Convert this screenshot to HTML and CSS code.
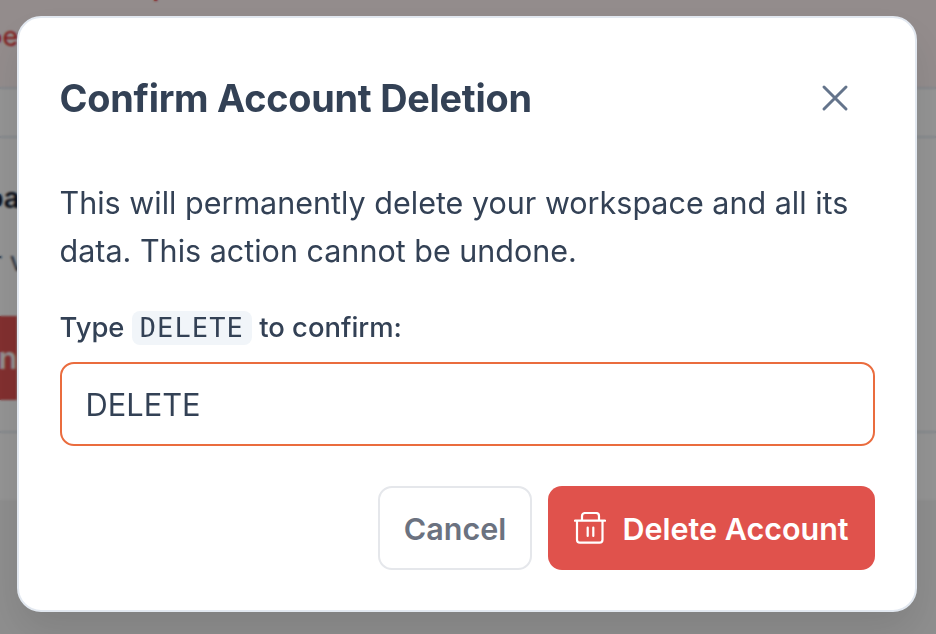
FILE: index.html
```html
<!DOCTYPE html>
<html lang="en">
<head>
<meta charset="utf-8">
<title>Confirm Account Deletion</title>
<link rel="stylesheet" href="styles.css">
</head>
<body>
<div class="page">
  <section class="alert">
    <p class="alert-line alert-top">y</p>
    <p class="alert-line alert-bottom">be</p>
  </section>
  <section class="band-plain"></section>
  <section class="danger">
    <h3 class="danger-title">pa</h3>
    <p class="danger-text">r v</p>
    <div class="danger-btn">n</div>
  </section>
  <section class="band-last"></section>
  <section class="foot"></section>
</div>
<div class="overlay">
  <div class="modal" role="dialog">
    <header class="modal-head">
      <h2 class="modal-title">Confirm Account Deletion</h2>
      <svg class="close" width="30" height="30" viewBox="0 0 30 30" fill="none" stroke="#64748b" stroke-width="3" stroke-linecap="round"><path d="M4 4 26 26M26 4 4 26"/></svg>
    </header>
    <p class="modal-text">This will permanently delete your workspace and all its data. This action cannot be undone.</p>
    <label class="field-label" for="confirm">Type <code class="kbd">DELETE</code> to confirm:</label>
    <input class="field" id="confirm" type="text" value="DELETE">
    <footer class="actions">
      <button class="btn btn-cancel" type="button">Cancel</button>
      <button class="btn btn-delete" type="button">
        <svg width="32" height="32" viewBox="0 0 32 32" fill="none" stroke="#fff" stroke-width="2.2" stroke-linecap="round" stroke-linejoin="round"><path d="M1 8.700h30M3 8.700v19a3 3 0 0 0 3 3h19.500a3 3 0 0 0 3-3v-19M8 8.700v-4.700a3 3 0 0 1 3-3h11a3 3 0 0 1 3 3v4.700M13.700 15.500v8.500M19.300 15.500v8.500"/></svg>
        <span>Delete Account</span>
      </button>
    </footer>
  </div>
</div>
</body>
</html>
```

FILE: styles.css
```css
* { box-sizing: border-box; }
html, body { margin: 0; height: 100%; overflow: hidden; }
body { font-family: Inter, "Liberation Sans", sans-serif; background: #fff; color: #334155; }

.page { height: 634px; display: flex; flex-direction: column; }
.alert { height: 89px; background: #fdf2f2; border-bottom: 2px solid #e2e8f0; overflow: hidden; }
.alert-line { margin: 0; color: #dc2626; font-size: 27px; line-height: 40px; white-space: nowrap; }
.alert-top { margin-top: -34px; padding-left: 152px; }
.alert-bottom { margin: 11px 0 0 -14px; }
.band-plain { height: 49px; background: #fff; border-bottom: 2px solid #e2e8f0; }
.danger { height: 295px; background: #fff; border-bottom: 2px solid #e2e8f0; padding-top: 42px; }
.danger-title { margin: 0 0 0 -14px; font-size: 28px; line-height: 36px; color: #0f172a; font-weight: 600; }
.danger-text { margin: 26px 0 0 -8px; font-size: 27px; line-height: 40px; color: #475569; white-space: nowrap; }
.danger-btn { margin-top: 34px; width: 200px; height: 84px; margin-left: -183px; background: #e05252; color: #fff; font-size: 30px; font-weight: 600; display: flex; align-items: center; justify-content: flex-end; }
.band-last { height: 67px; background: #fff; }
.foot { flex: 1; background: #f4f4f4; }

.overlay { position: fixed; inset: 0; background: rgba(0, 0, 0, .42); backdrop-filter: blur(1px); display: flex; align-items: flex-start; justify-content: center; padding: 16px 2px 0 0; }
.modal { width: 900px; height: 596px; background: #fff; border: 2px solid #e2e8f0; border-radius: 24px; padding: 51px 40px 40px 40.5px; box-shadow: 0 20px 40px rgba(0, 0, 0, .1); display: flex; flex-direction: column; }
.modal-head { display: flex; justify-content: space-between; align-items: center; height: 58px; padding-right: 25px; }
.modal-title { margin: 0; font-size: 37.85px; line-height: 58px; font-weight: 700; color: #334155; letter-spacing: -.24px; }
.modal-text { margin: 52px 0 0; font-size: 30.5px; line-height: 48px; color: #334155; }
.field-label { display: block; margin-top: 31px; font-size: 27.4px; line-height: 42px; font-weight: 500; color: #334155; }
.kbd { display: inline-block; font-family: "DejaVu Sans Mono", monospace; font-size: 27px; line-height: 34px; font-weight: 500; letter-spacing: 1.1px; background: #f1f5f9; border-radius: 8px; padding: 0 8px; }
.field { margin-top: 14px; width: 100%; height: 84px; border: 2px solid #ea6c3e; border-radius: 14px; padding: 0 24px; font: 400 30.8px Inter, sans-serif; color: #334155; background: #fff; outline: 0; }
.actions { display: flex; justify-content: flex-end; gap: 16px; margin-top: 40px; }
.btn { height: 84px; border-radius: 14px; font: 600 30.5px Inter, sans-serif; display: flex; align-items: center; cursor: pointer; }
.btn-cancel { width: 154px; justify-content: center; background: #fff; border: 2px solid #e5e7eb; color: #6b7280; }
.btn-delete { width: 327px; justify-content: center; gap: 16px; background: #e0524c; border: 0; color: #fff; }
```
